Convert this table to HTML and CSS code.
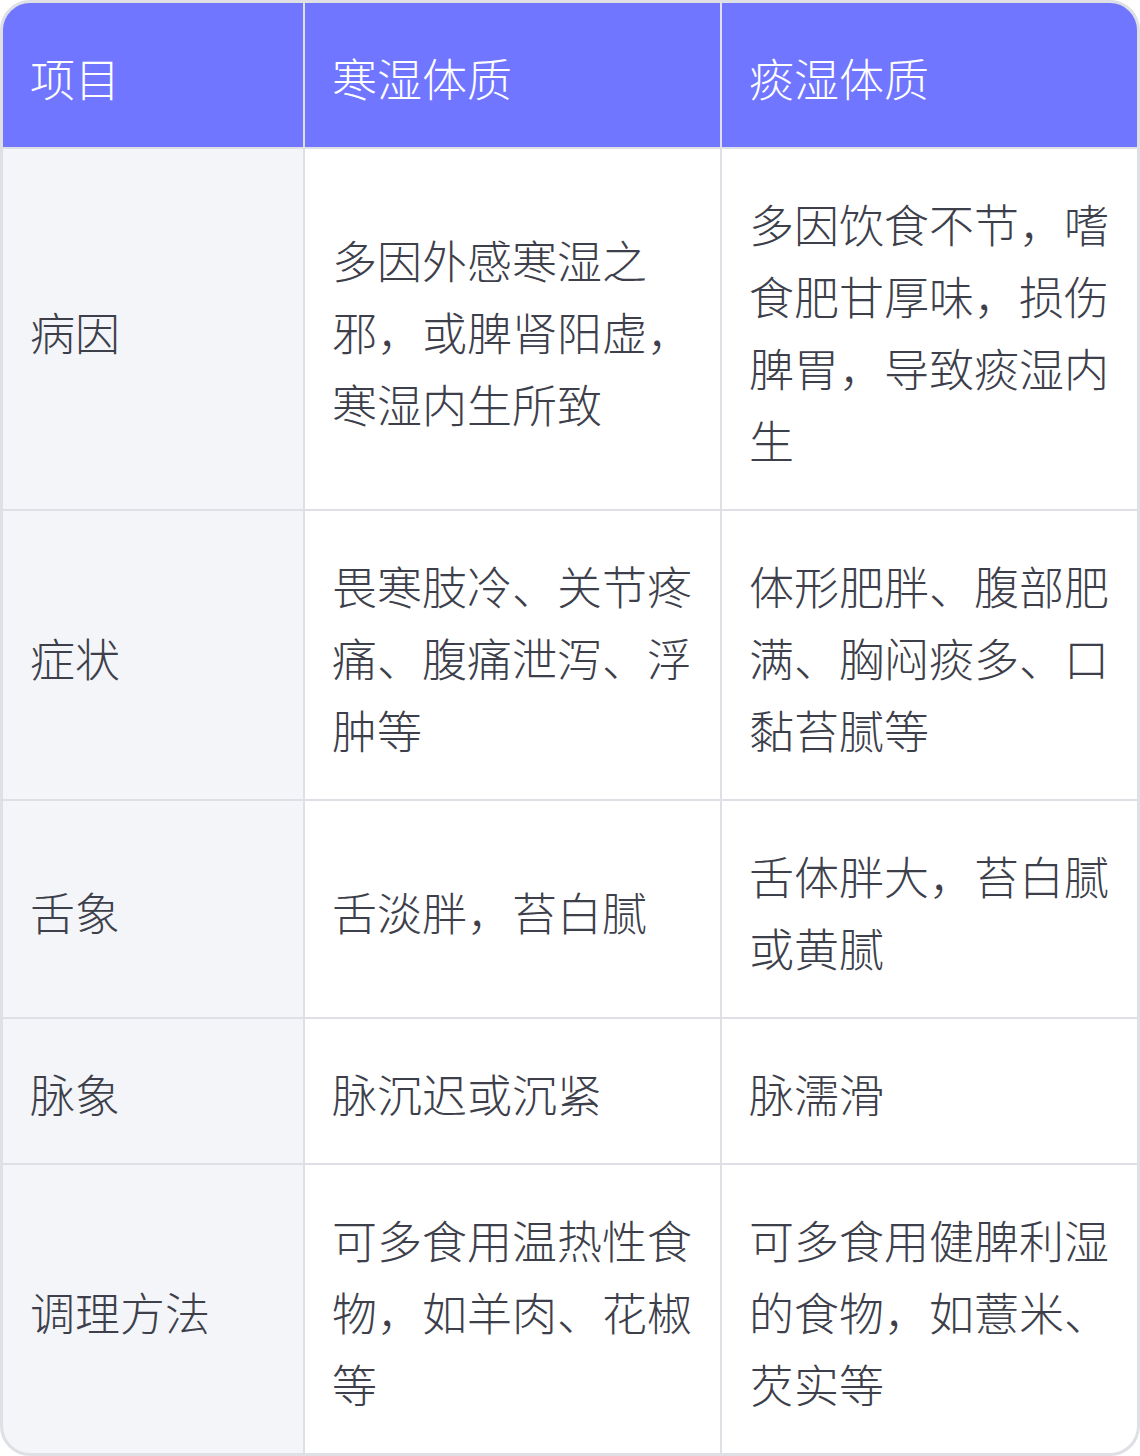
FILE: index.html
```html
<!DOCTYPE html>
<html lang="zh">
<head>
<meta charset="utf-8">
<link rel="stylesheet" href="styles.css">
</head>
<body>
<div class="table">
  <div class="cell head">项目</div>
  <div class="cell head">寒湿体质</div>
  <div class="cell head">痰湿体质</div>

  <div class="cell label">病因</div>
  <div class="cell">多因外感寒湿之邪，或脾肾阳虚，寒湿内生所致</div>
  <div class="cell">多因饮食不节，嗜食肥甘厚味，损伤脾胃，导致痰湿内生</div>

  <div class="cell label">症状</div>
  <div class="cell">畏寒肢冷、关节疼痛、腹痛泄泻、浮肿等</div>
  <div class="cell">体形肥胖、腹部肥满、胸闷痰多、口黏苔腻等</div>

  <div class="cell label">舌象</div>
  <div class="cell">舌淡胖，苔白腻</div>
  <div class="cell">舌体胖大，苔白腻或黄腻</div>

  <div class="cell label">脉象</div>
  <div class="cell">脉沉迟或沉紧</div>
  <div class="cell">脉濡滑</div>

  <div class="cell label">调理方法</div>
  <div class="cell">可多食用温热性食物，如羊肉、花椒等</div>
  <div class="cell">可多食用健脾利湿的食物，如薏米、芡实等</div>
</div>
</body>
</html>
```
FILE: styles.css
```css
html, body {
  margin: 0;
  padding: 0;
  background: #ffffff;
}
.table {
  width: 1140px;
  height: 1456px;
  box-sizing: border-box;
  border: 3px solid #dfe0e5;
  border-radius: 30px;
  overflow: hidden;
  display: grid;
  grid-template-columns: 300px 415px 415px;
  grid-template-rows: 144px 360px 288px 216px 144px 288px;
  gap: 2px;
  background: #dfe0e5;
  font-family: "Noto Sans CJK SC", "Noto Sans", sans-serif;
  font-size: 45px;
  font-weight: 300;
  line-height: 72px;
  color: #3d404b;
}
.cell {
  background: #ffffff;
  padding: 6px 26px 0 27px;
  display: flex;
  align-items: center;
  box-sizing: border-box;
}
.head {
  background: #7076ff;
  color: #ffffff;
}
.label {
  background: #f4f5f9;
}
```
